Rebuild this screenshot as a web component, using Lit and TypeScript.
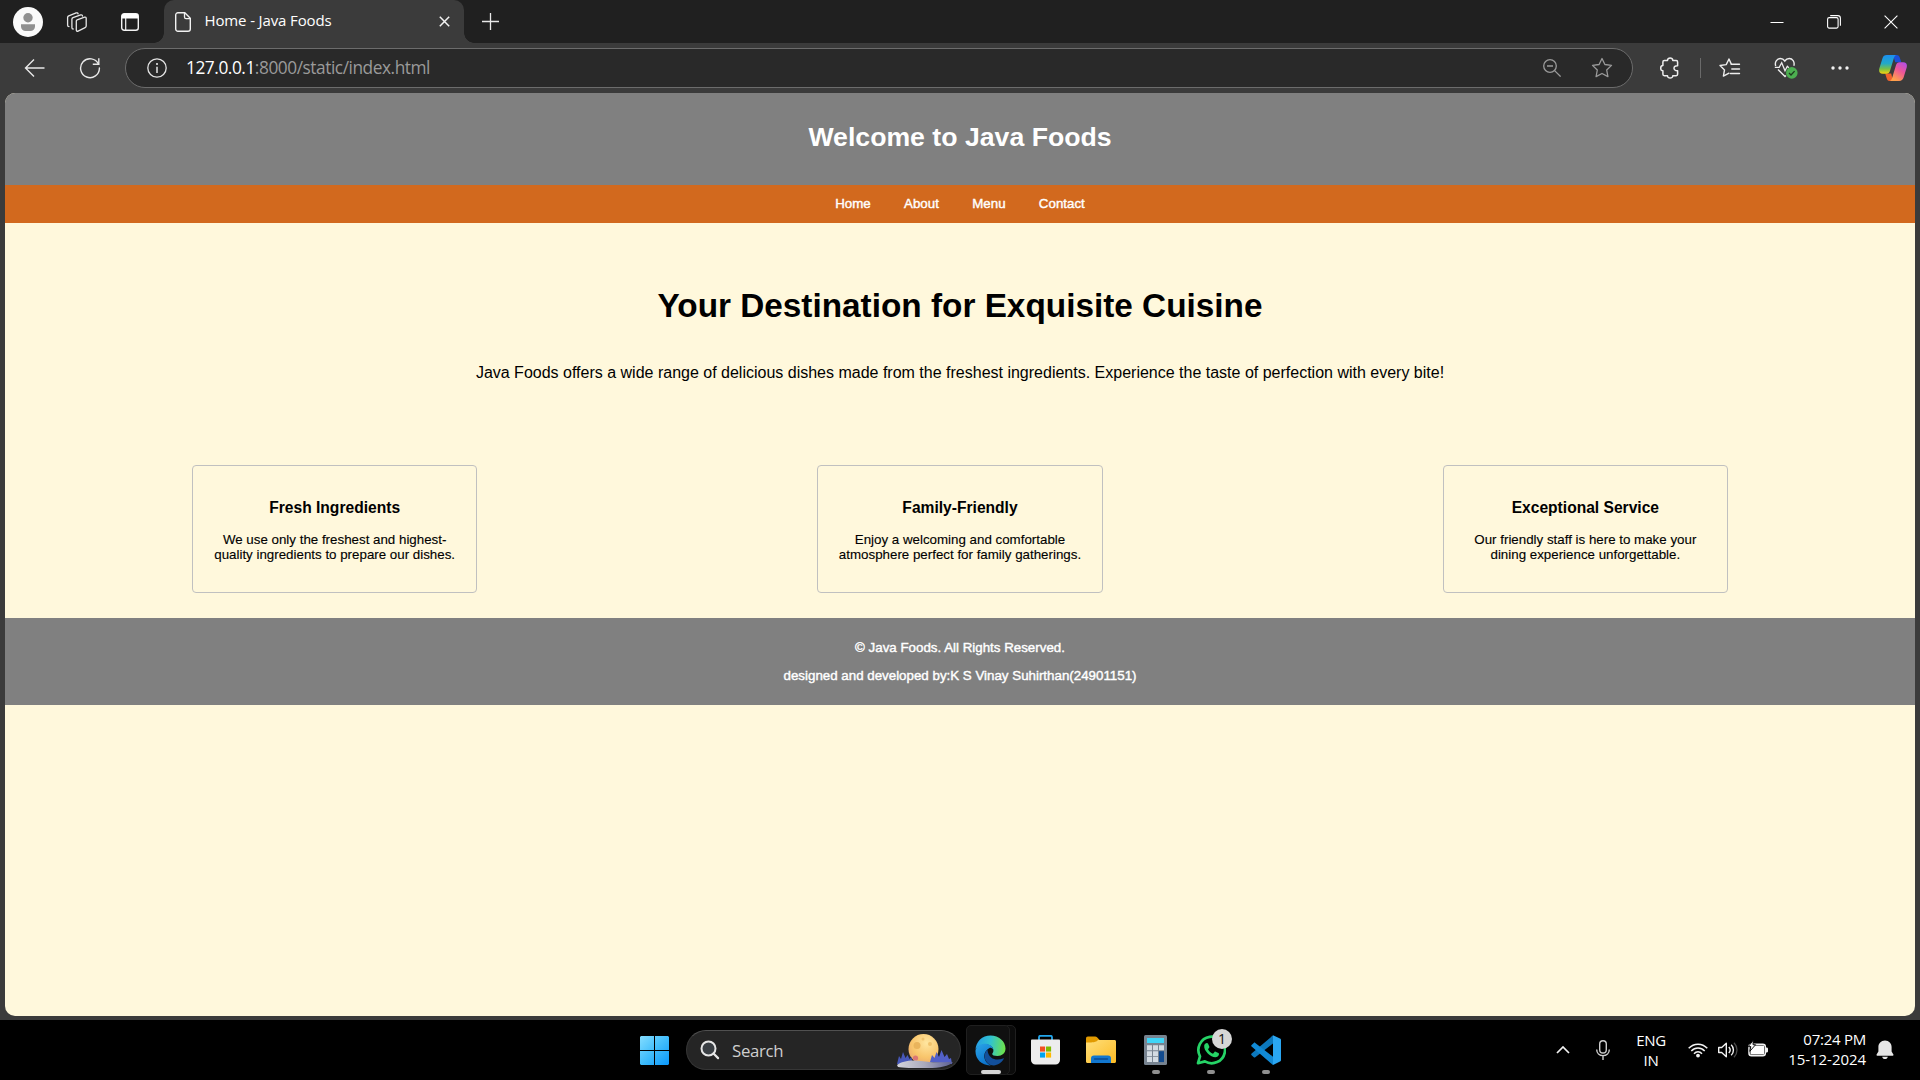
import { LitElement, html, css, svg } from "lit";
import { customElement } from "lit/decorators.js";

const S = (w: number, h: number, body: unknown, vb?: string) =>
  html`<svg width=${w} height=${h} viewBox=${vb ?? `0 0 ${w} ${h}`} fill="none">${body}</svg>`;

const icons = {
  avatar: S(30, 30, svg`<circle cx="15" cy="15" r="15" fill="#fafafa"/><circle cx="15" cy="10.8" r="4.7" fill="#909090"/><path d="M8 17.2h14v2.2a4.6 4.6 0 0 1-4.6 4.6h-4.8A4.6 4.6 0 0 1 8 19.400Z" fill="#909090"/>`),
  stacks: S(22, 22, svg`<g stroke="#e6e6e6" stroke-width="1.3" stroke-linejoin="round" stroke-linecap="round"><path d="M11.200 8.800 18.600 6.200c1-.3 1.600.2 1.600 1.100v7.800c0 .8-.3 1.300-1.100 1.600l-7 3.400c-1 .4-1.800 0-1.800-1.200v-8.800c0-.8.300-1.300.9-1.300"/><path d="M7.200 18c-.8 0-1.300-.4-1.300-1.300V8.300c0-.8.4-1.300 1.100-1.600l7.700-2.800c.9-.3 1.700.1 1.800 1.100"/><path d="M3 15.600c-.9 0-1.400-.5-1.400-1.400V6.400c0-.8.4-1.300 1.100-1.600l7.500-2.900c.9-.3 1.700 0 1.900 1"/></g>`),
  panel: S(18, 18, svg`<rect x=".7" y=".7" width="16.600" height="16.600" rx="2.500" stroke="#f2f2f2" stroke-width="1.400"/><path d="M.7 5.500V3A2.500 2.500 0 0 1 3 .7h12A2.500 2.500 0 0 1 17.300 3v2.500Z" fill="#fff"/><path d="M4.700 5v12" stroke="#f2f2f2" stroke-width="1.200"/>`),
  doc: S(16, 20, svg`<path d="M3 .7h6.800l5.500 5.500V17a2.300 2.300 0 0 1-2.300 2.300H3A2.300 2.300 0 0 1 .7 17V3A2.300 2.300 0 0 1 3 .7Z" stroke="#f2f2f2" stroke-width="1.400"/><path d="M9.500 1v4c0 1 .5 1.600 1.500 1.600h4" stroke="#f2f2f2" stroke-width="1.300"/>`),
  tabClose: S(11, 11, svg`<path d="m.8.8 9.400 9.400M10.200.8.8 10.200" stroke="#f2f2f2" stroke-width="1.500"/>`),
  plus: S(17, 17, svg`<path d="M8.500 0v17M0 8.500h17" stroke="#e8e8e8" stroke-width="1.300"/>`),
  min: S(14, 14, svg`<path d="M.5 7.500h13" stroke="#fff" stroke-width="1"/>`),
  restore: S(14, 14, svg`<rect x=".6" y="2.600" width="10.500" height="10.500" rx="1.600" stroke="#fff" stroke-width="1.100"/><path d="M3.200.6h7.600a2.600 2.600 0 0 1 2.600 2.600v7.600" stroke="#fff" stroke-width="1.100"/>`),
  close: S(14, 14, svg`<path d="m.6.6 12.800 12.800M13.400.6.6 13.400" stroke="#fff" stroke-width="1.100"/>`),
  back: S(22, 20, svg`<path d="M20.500 10H1.800M10 1.500 1.500 10l8.500 8.500" stroke="#e8e8e8" stroke-width="1.400"/>`),
  refresh: S(22, 22, svg`<path d="M19.500 7.200A9.400 9.400 0 1 0 20.400 11" stroke="#e8e8e8" stroke-width="1.400" stroke-linecap="round"/><path d="M19.800 1.300v6h-6" stroke="#e8e8e8" stroke-width="1.400"/>`),
  info: S(20, 20, svg`<circle cx="10" cy="10" r="9.200" stroke="#e4e4e4" stroke-width="1.300"/><path d="M10 8.800V15" stroke="#f2f2f2" stroke-width="1.400"/><circle cx="10" cy="6" r="1" fill="#f2f2f2"/>`),
  zoomOut: S(18, 18, svg`<circle cx="7" cy="7" r="6.300" stroke="#9a9a9a" stroke-width="1.300"/><path d="M4 7h6M11.600 11.600l6 6" stroke="#9a9a9a" stroke-width="1.300"/>`),
  star: S(22, 22, svg`<path d="m11 1.500 2.900 6 6.600.9-4.800 4.600 1.200 6.600L11 16.500l-5.900 3.100L6.300 13 1.500 8.400l6.600-.9Z" stroke="#9a9a9a" stroke-width="1.300" stroke-linejoin="round"/>`),
  puzzle: S(20, 22, svg`<path d="M4.300 3.600h3.200c-.1-3.600 5.400-3.600 5.300 0h3.400c.9 0 1.400.5 1.400 1.400v3.700c-4.800-.4-4.800 5.400 0 5v3.600c0 .9-.5 1.400-1.400 1.400h-3.400c.1 3.200-5.400 3.200-5.300 0H4.300c-.9 0-1.400-.5-1.400-1.400v-3.500c-2.900 0-2.900-5.200 0-5.200V5c0-.9.5-1.400 1.400-1.400Z" stroke="#ededed" stroke-width="1.500" stroke-linejoin="round"/>`),
  favs: S(22, 22, svg`<path d="M12.300 7.100 10 2 7.200 7.600 1 8.500l4.500 4.400-1.100 6.200L10 16.200" stroke="#ededed" stroke-width="1.400" stroke-linejoin="round" stroke-linecap="round"/><path d="M12.300 7.200h8.200M12.800 12h7.700M11.500 16.500h9" stroke="#ededed" stroke-width="1.400" stroke-linecap="round"/>`),
  heart: S(24, 22, svg`<path d="M1.700 9C.3 4.500 3.500 1.500 6.300 1.500c2 0 3.500 1 4.500 2.500 1-1.500 2.500-2.500 4.500-2.500 3 0 5.800 3 4.500 7.300M4 12.500l7 7 1-1" stroke="#ededed" stroke-width="1.400"/><path d="M.8 10.300h4.400l2.500-4.500 3.300 8 2.300-4.500 1.500 1.500" stroke="#ededed" stroke-width="1.300"/><circle cx="17.800" cy="15.900" r="5.800" fill="#4caf50"/><path d="m15 16 2 2 3.600-3.900" stroke="#1d3a1e" stroke-width="1.300"/>`),
  dots: S(18, 4, svg`<g fill="#f2f2f2"><circle cx="2" cy="2" r="1.700"/><circle cx="9" cy="2" r="1.700"/><circle cx="16" cy="2" r="1.700"/></g>`),
  copilot: S(28, 26, svg`<defs><linearGradient id="ca" x1="0" y1="0" x2="0" y2="1"><stop stop-color="#1c8ff0"/><stop offset=".45" stop-color="#22a9c8"/><stop offset=".75" stop-color="#7bc143"/><stop offset="1" stop-color="#f8d20e"/></linearGradient><linearGradient id="cb" x1="1" y1="0" x2=".4" y2="1"><stop stop-color="#a94df0"/><stop offset=".5" stop-color="#ee5598"/><stop offset="1" stop-color="#ffa14a"/></linearGradient></defs><path d="M14 0h3.500c2 0 2.800 1.200 3.400 3l1.400 4.200h-6Z" fill="#1b4fd8"/><path d="M14 26h-3.300C8.500 26 8 24.500 7.400 22.600L6.200 18.600h6Z" fill="#f0612c"/><path d="M7.800 0h9.400c-1.400.5-2 2-2.600 4l-3.500 11.500c-.7 2.200-1.700 3.200-3.800 3.200H3.700C.7 18.700-.4 16.500.3 13.500L3.500 3.200C4.200 1.200 5.500 0 7.800 0Z" fill="url(#ca)"/><path d="M20.200 26h-9.400c1.400-.5 2-2 2.600-4l3.500-11.500c.7-2.200 1.700-3.200 3.800-3.200h3.600c3 0 4.100 2.200 3.400 5.200l-3.200 10.300c-.7 2-2 3.200-4.300 3.200Z" fill="url(#cb)"/>`),
  win: S(29, 29, svg`<defs><linearGradient id="wg" gradientUnits="userSpaceOnUse" x1="0" y1="0" x2="29" y2="29"><stop stop-color="#84ddff"/><stop offset=".5" stop-color="#41bdfb"/><stop offset="1" stop-color="#0a98fb"/></linearGradient></defs><path d="M1 0h13v14H0V1Zm14 0h13l1 1v13H15ZM0 15h14v14H1l-1-1Zm15 0h14v13l-1 1H15Z" fill="url(#wg)"/>`),
  mag: S(20, 20, svg`<circle cx="8.500" cy="8.500" r="7" fill="#3a3f44" stroke="#e6e6e6" stroke-width="2"/><path d="m13.500 13.500 4.600 4.600" stroke="#e6e6e6" stroke-width="2.200" stroke-linecap="round"/>`),
  moon: S(58, 34, svg`<defs><radialGradient id="mg" cx=".6" cy=".3" r=".8"><stop stop-color="#ffe6a0"/><stop offset=".6" stop-color="#f8c56b"/><stop offset="1" stop-color="#e8a46c"/></radialGradient><linearGradient id="lg"><stop stop-color="#d4d4da"/><stop offset=".5" stop-color="#a9a9bb"/><stop offset="1" stop-color="#5b5f94"/></linearGradient></defs><circle cx="27.500" cy="15" r="15" fill="url(#mg)"/><circle cx="21" cy="11.500" r="3.500" fill="#e9b45c"/><circle cx="34" cy="10" r="2" fill="#f0c26c"/><circle cx="27" cy="5" r="1.500" fill="#f0c26c"/><circle cx="19.500" cy="24" r="2.600" fill="#dc7674"/><path d="M1 30l2-8 2 3 2-7 2.500 6 2-3 2 4 2-2 1 7Z" fill="#4757b8"/><path d="M34 28l2-7 2.500 3 2-6 2.500 5 2.500-7 3 7 2.500-3 2 5 2-1 1 6Z" fill="#5260c8"/><path d="M1 31c5-4 14-5.500 24-4 12 2 20 1 32 1-4 4-13 6-25 6C17 34 6 34 2 33Z" fill="url(#lg)"/>`),
  edge: S(31, 31, svg`<defs><linearGradient id="e1" x1="0" y1=".3" x2="1" y2=".4"><stop stop-color="#249ce8"/><stop offset=".5" stop-color="#31c3cf"/><stop offset="1" stop-color="#6de34a"/></linearGradient><linearGradient id="e2" x1="0" y1="0" x2=".5" y2="1"><stop stop-color="#2ba5e8"/><stop offset="1" stop-color="#0b72cc"/></linearGradient></defs><path d="M.5 15C.8 6.500 7.300.5 15.500.5 24 .5 30.500 6.600 30.500 13.500c0 4.700-3.600 7.500-8 7.500-3.400 0-5.300-1-5.300-2 0-.8 1.200-1.300 1.200-3.600 0-3.200-3.200-5.800-7.500-5.800C5.500 9.600 1.500 12 .5 15Z" fill="url(#e1)"/><path d="M.5 15.500C1.500 11.200 5.500 8.800 10 8.800c4 0 8.300 2.600 8.300 6-.7-1.400-2-2-3.400-2-4 2-6.400 5.700-5.400 10.200.8 3.800 4 7.300 7.500 7.300C8 31.500 0 25 .5 15.500Z" fill="url(#e2)"/><path d="M12.400 14.400c-3.800 4.200-3.900 10 .4 13.800 5.300 4.500 13 1.500 15.900-4.100.3-.7-.2-1-.8-.7-5.700 2.700-14.600 1.200-15.500-9Z" fill="#124f9b"/>`),
  store: S(29, 30, svg`<path d="M8 7V2.200C8 1.300 8.500.8 9.400.8h10.200c.9 0 1.400.5 1.400 1.400V7" stroke="#22a6ec" stroke-width="1.800"/><path d="M0 5.500C0 5 .5 4.500 1 4.500h27c.5 0 1 .5 1 1V25a4.500 4.500 0 0 1-4.500 4.500h-20A4.500 4.500 0 0 1 0 25Z" fill="#ededed"/><path d="M9 11.500h5.100v5.100H9Z" fill="#f25022"/><path d="M15 11.500h5.100v5.100H15Z" fill="#7fba00"/><path d="M9 17.500h5.100v5.100H9Z" fill="#00a4ef"/><path d="M15 17.500h5.100v5.100H15Z" fill="#ffb900"/>`),
  folder: S(30, 28, svg`<defs><linearGradient id="fg" x1="0" y1="0" x2="1" y2="1"><stop stop-color="#ffdf7b"/><stop offset="1" stop-color="#fcbb24"/></linearGradient></defs><path d="M0 2.500C0 1.500.8.600 1.800.600h7.400c.8 0 1.300.2 1.800.7l2.200 2.200V10H0Z" fill="#e19a00"/><path d="M0 6.500c5 0 10 .2 12-2.500h16.500c.9 0 1.500.6 1.500 1.500v20c0 .9-.6 1.500-1.500 1.500h-27C.6 27 0 26.400 0 25.500Z" fill="url(#fg)"/><path d="M5 27v-4.500c0-1.800 1-3 3-3h14c2 0 3 1.200 3 3V27Z" fill="#1277cf"/><path d="M8.500 23h13" stroke="#0b4a92" stroke-width="1.400" stroke-linecap="round"/>`),
  calc: S(23, 30, svg`<rect width="23" height="30" rx="1.500" fill="#778390"/><path d="M3 3h17v5H3Z" fill="#3fd5f7"/><g fill="#d3dbe2"><path d="M3 10.300h5v5H3ZM9 10.300h5v5H9ZM15 10.300h5v5h-5ZM3 16.200h5v5H3ZM9 16.200h5v5H9ZM3 22.100h5v5H3ZM9 22.100h5v5H9Z"/></g><path d="M15 16.200h5v10.900h-5Z" fill="#124b8f"/>`),
  whatsapp: S(30, 30, svg`<path d="M2 28.200 4 21.300A13.300 13.300 0 1 1 8.900 26.400Z" stroke="#25d366" stroke-width="2.700" stroke-linejoin="round"/><path d="M8.200 10.500c.3-1.600 1.500-2.600 2.700-2.600.6 0 .9.200 1.200.8l1.200 2.800c.2.500.1.900-.2 1.300l-1.100 1.400c1.100 2.100 2.800 3.600 5 4.500l1.500-1.700c.3-.4.700-.5 1.100-.3l2.800 1.300c.5.300.7.600.6 1.200-.2 1.800-2 3-3.700 3C14.800 22.200 7.500 16 8.200 10.500Z" fill="#25d366"/>`),
  vscode: S(30, 30, svg`<path d="M22 .3 29 3.600c.7.300 1 .8 1 1.500v20c0 .7-.3 1.200-1 1.500L22 30Z" fill="#2aa6f2"/><path d="M22 .3v8.200L4.300 22.200c-.5.4-1 .4-1.500 0L.6 20.200c-.6-.5-.6-1.200 0-1.700Z" fill="#0c78bd"/><path d="M22 30v-8.300L4.300 7.900c-.5-.4-1-.4-1.500 0L.6 9.900c-.6.500-.6 1.200 0 1.700Z" fill="#1189d4"/>`),
  chevron: S(14, 8, svg`<path d="m1 7 6-6 6 6" stroke="#f2f2f2" stroke-width="1.700"/>`),
  mic: S(14, 20, svg`<rect x="3.700" y=".7" width="6.600" height="12.300" rx="3.300" stroke="#cdcdcd" stroke-width="1.400"/><path d="M.7 9.500c0 3.700 2.800 6.100 6.300 6.100s6.300-2.400 6.300-6.100M7 15.600V20" stroke="#cdcdcd" stroke-width="1.400"/>`),
  wifi: S(20, 16, svg`<g stroke="#f2f2f2" stroke-width="1.500"><path d="M.7 6.300c5.200-5.500 13.400-5.500 18.600 0"/><path d="M3.300 9c3.800-4 9.600-4 13.400 0"/><path d="M6 11.700c2.300-2.500 5.700-2.500 8 0"/></g><circle cx="10" cy="13.600" r="1.900" fill="#f2f2f2"/>`),
  volume: S(20, 16, svg`<path d="M.7 5.500h3L8.300 1.300v13.400L3.700 10.500h-3Z" stroke="#f2f2f2" stroke-width="1.400" stroke-linejoin="round"/><path d="M10.800 5c1.600 1.700 1.600 4.300 0 6M13.200 2.800c3 3 3 7.400 0 10.400" stroke="#f2f2f2" stroke-width="1.400"/><path d="M16 .8c4 4.200 4 10.200 0 14.400" stroke="#4a4a4a" stroke-width="1.300"/>`),
  battery: S(20, 17, svg`<rect x="1" y="4.200" width="16.300" height="11.600" rx="2.500" stroke="#f2f2f2" stroke-width="1.500"/><path d="M5 5.500h11v9H2.500v-3Z" fill="#fff"/><path d="M18 7.500c1.300 0 2 .5 2 1.300v2.400c0 .8-.7 1.300-2 1.300Z" fill="#f2f2f2"/><path d="M5.200.3.300 6.600h2.500l-1 4.700L7.600 4.700H5Z" fill="#fff" stroke="#000" stroke-width=".9"/>`),
  bell: S(18, 20, svg`<path d="M9 .5c4 0 6.600 3 6.600 6.600v4.300l1.800 3.200c.3.600 0 1.100-.6 1.100H1.200c-.6 0-.9-.5-.6-1.100l1.800-3.200V7.100C2.400 3.500 5 .5 9 .5ZM6.200 16.700h5.600c-.3 1.500-1.300 2.400-2.800 2.400s-2.500-.9-2.800-2.400Z" fill="#e6e6e6"/>`),
};

@customElement("browser-chrome")
class BrowserChrome extends LitElement {
  static styles = css`
    :host { display: block; font-family: "Open Sans", "Noto Sans", sans-serif; color: #fff; }
    svg { display: block; flex: none; }
    .strip { height: 43px; background: #202020; display: flex; align-items: center; box-sizing: border-box; padding-left: 13px; }
    .stacks { margin-left: 23px; }
    .panel { margin-left: 33px; }
    .tab { position: relative; align-self: stretch; margin-left: 25px; width: 300px; box-sizing: border-box; background: #3b3b3b; border-radius: 10px 10px 0 0; display: flex; align-items: center; padding: 0 14px 0 11px; }
    .tab::before, .tab::after { content: ""; position: absolute; bottom: 0; width: 10px; height: 10px; }
    .tab::before { left: -10px; background: radial-gradient(circle at 0 0, #202020 9.500px, #3b3b3b 10px); }
    .tab::after { right: -10px; background: radial-gradient(circle at 100% 0, #202020 9.500px, #3b3b3b 10px); }
    .title { flex: 1; margin-left: 13.500px; font-size: 15px; line-height: 20px; padding-bottom: 3px; letter-spacing: -0.13px; white-space: nowrap; }
    .plus { margin-left: 18px; }
    .win { margin-left: auto; display: flex; align-items: center; gap: 43px; padding-right: 22px; }
    .bar { height: 50px; background: #3b3b3b; display: flex; align-items: center; }
    .back { margin-left: 24px; }
    .refresh { margin-left: 33px; }
    .omni { margin-left: 24px; width: 1508px; height: 40px; box-sizing: border-box; border: 1px solid #6c6c6c; border-radius: 20px; background: #292929; display: flex; align-items: center; padding-left: 21px; padding-right: 19px; }
    .url { flex: 1; margin-left: 19px; font-size: 17.300px; line-height: 24px; color: #9a9a9a; letter-spacing: -0.45px; }
    .host { color: #fff; }
    .fav { margin-left: 30px; }
    .puzzle { margin-left: 27px; }
    .sep { width: 1px; height: 20px; margin-left: 20px; background: #6a6a6a; }
    .list { margin-left: 18px; }
    .heart { margin-left: 33px; }
    .dots { margin-left: 33px; }
    .copilot { margin-left: 30px; }
  `;
  render() {
    return html`
      <div class="strip">
        ${icons.avatar}<span class="stacks">${icons.stacks}</span><span class="panel">${icons.panel}</span>
        <div class="tab">${icons.doc}<span class="title">Home - Java Foods</span>${icons.tabClose}</div>
        <span class="plus">${icons.plus}</span>
        <div class="win">${icons.min}${icons.restore}${icons.close}</div>
      </div>
      <div class="bar">
        <span class="back">${icons.back}</span><span class="refresh">${icons.refresh}</span>
        <div class="omni">
          ${icons.info}<span class="url"><span class="host">127.0.0.1</span>:8000/static/index.html</span>
          ${icons.zoomOut}<span class="fav">${icons.star}</span>
        </div>
        <span class="puzzle">${icons.puzzle}</span><span class="sep"></span><span class="list">${icons.favs}</span>
        <span class="heart">${icons.heart}</span><span class="dots">${icons.dots}</span><span class="copilot">${icons.copilot}</span>
      </div>
    `;
  }
}

const features = [
  ["Fresh Ingredients", "We use only the freshest and highest-", "quality ingredients to prepare our dishes."],
  ["Family-Friendly", "Enjoy a welcoming and comfortable", "atmosphere perfect for family gatherings."],
  ["Exceptional Service", "Our friendly staff is here to make your", "dining experience unforgettable."],
];

@customElement("food-page")
class FoodPage extends LitElement {
  static styles = css`
    :host { display: block; height: 923px; background: #fff8dc; border-radius: 10px; overflow: hidden; font-family: "Liberation Sans", Arial, sans-serif; font-size: 13.333px; line-height: 15px; text-align: center; color: #000; }
    h1, h2, h3, p { margin: 0; }
    header { height: 92px; box-sizing: border-box; padding-top: 29px; background: #808080; color: #fff; }
    h1 { font-size: 26.667px; line-height: 30px; }
    nav { height: 38px; box-sizing: border-box; padding-top: 11px; background: #d2691e; color: #fff; display: flex; justify-content: center; gap: 33.300px; -webkit-text-stroke: 0.4px #fff; }
    .hero { height: 242px; box-sizing: border-box; padding-top: 64px; }
    h2 { font-size: 33.333px; line-height: 38px; }
    .lead { font-size: 16px; line-height: 18px; margin-top: 39px; }
    .cards { display: flex; justify-content: space-between; padding: 0 187px 25px; }
    .card { width: 285.300px; height: 128px; box-sizing: border-box; border: 1px solid #c0c0c0; border-radius: 4px; padding-top: 33px; }
    h3 { font-size: 15.600px; line-height: 18px; margin-bottom: 15px; }
    .card p { -webkit-text-stroke: 0.12px #000; }
    footer { height: 87px; box-sizing: border-box; padding-top: 22px; background: #808080; color: #fff; display: flex; flex-direction: column; gap: 13px; -webkit-text-stroke: 0.4px #fff; }
  `;
  render() {
    return html`
      <header><h1>Welcome to Java Foods</h1></header>
      <nav>${["Home", "About", "Menu", "Contact"].map((t) => html`<span>${t}</span>`)}</nav>
      <section class="hero">
        <h2>Your Destination for Exquisite Cuisine</h2>
        <p class="lead">Java Foods offers a wide range of delicious dishes made from the freshest ingredients. Experience the taste of perfection with every bite!</p>
      </section>
      <section class="cards">
        ${features.map(([t, a, b]) => html`<div class="card"><h3>${t}</h3><p>${a}<br />${b}</p></div>`)}
      </section>
      <footer><p>© Java Foods. All Rights Reserved.</p><p>designed and developed by:K S Vinay Suhirthan(24901151)</p></footer>
    `;
  }
}

@customElement("task-bar")
class TaskBar extends LitElement {
  static styles = css`
    :host { display: flex; align-items: center; height: 60px; background: #000; color: #fff; font-family: "Open Sans", "Noto Sans", sans-serif; }
    svg { display: block; flex: none; }
    .start { margin-left: 640px; padding-top: 1px; }
    .search { margin-left: 17px; width: 275px; height: 40px; box-sizing: border-box; border: 1px solid #363636; border-top-color: #505050; border-radius: 20px; background: #252525; display: flex; align-items: center; padding: 0 6px 0 13px; }
    .label { flex: 1; margin-left: 12px; font-size: 16.800px; line-height: 22px; padding-top: 1px; letter-spacing: -0.3px; color: #cfcfcf; }
    .scene { padding-top: 1px; }
    .apps { display: flex; margin-left: 2px; }
    .app { position: relative; width: 55px; height: 60px; display: flex; align-items: center; justify-content: center; }
    .tile { position: absolute; left: 3px; top: 5px; width: 44px; height: 50px; box-sizing: border-box; border: 1px solid #1f1f1f; border-radius: 5px; background: #101010; }
    .tile2 { position: absolute; left: 40px; top: 5px; width: 13px; height: 50px; box-sizing: border-box; border: 1px solid #1f1f1f; border-radius: 5px; background: #0b0b0b; }
    .glyph { position: relative; }
    .run { position: absolute; left: 23.500px; bottom: 6px; width: 8px; height: 4px; border-radius: 2px; background: #8f8f8f; }
    .run.active { left: 18px; width: 20px; background: #d6d6d6; }
    .badge { position: absolute; left: 29px; top: 9px; width: 20px; height: 20px; border-radius: 50%; background: #d6d6d6; color: #111; font-size: 14px; line-height: 20px; text-align: center; }
    .tray { margin-left: auto; display: flex; align-items: center; padding-right: 26px; }
    .mic { margin-left: 26px; }
    .lang { margin-left: 26px; width: 30px; font-size: 15px; line-height: 20px; text-align: center; letter-spacing: -0.3px; display: flex; justify-content: center; }
    .wifi { margin-left: 22px; }
    .vol { margin-left: 10px; }
    .bat { margin-left: 10px; padding-bottom: 3px; }
    .clock { margin-left: 18px; width: 80px; font-size: 15px; line-height: 20px; padding-bottom: 2px; text-align: right; letter-spacing: -0.05px; white-space: nowrap; display: flex; justify-content: flex-end; }
    .time { letter-spacing: -0.25px; }
    .bell { margin-left: 10px; }
  `;
  render() {
    return html`
      <span class="start">${icons.win}</span>
      <div class="search">${icons.mag}<span class="label">Search</span><span class="scene">${icons.moon}</span></div>
      <div class="apps">
        <div class="app"><span class="tile2"></span><span class="tile"></span><span class="glyph">${icons.edge}</span><span class="run active"></span></div>
        <div class="app">${icons.store}</div>
        <div class="app">${icons.folder}</div>
        <div class="app">${icons.calc}<span class="run"></span></div>
        <div class="app">${icons.whatsapp}<span class="badge">1</span><span class="run"></span></div>
        <div class="app">${icons.vscode}<span class="run"></span></div>
      </div>
      <div class="tray">
        ${icons.chevron}<span class="mic">${icons.mic}</span>
        <div class="lang"><span>ENG<br />IN</span></div>
        <span class="wifi">${icons.wifi}</span><span class="vol">${icons.volume}</span><span class="bat">${icons.battery}</span>
        <div class="clock"><span><span class="time">07:24 PM</span><br />15-12-2024</span></div>
        <span class="bell">${icons.bell}</span>
      </div>
    `;
  }
}

@customElement("app-root")
class AppRoot extends LitElement {
  static styles = css`
    :host { display: block; width: 1920px; height: 1080px; overflow: hidden; background: #3b3b3b; }
    .view { padding: 0 5px 4px; }
  `;
  render() {
    return html`<browser-chrome></browser-chrome><div class="view"><food-page></food-page></div><task-bar></task-bar>`;
  }
}
